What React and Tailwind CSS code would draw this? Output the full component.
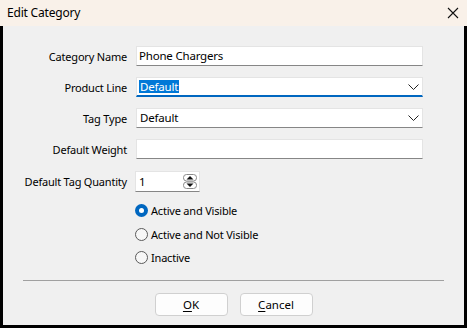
import React from 'react';

const font = { fontFamily: '"Noto Sans", "Segoe UI", sans-serif' };

const Chevron = () => (
    <svg width="11" height="6" viewBox="0 0 11 6" className="shrink-0">
        <path d="M0.5 0.5 L5.5 5.5 L10.5 0.5" fill="none" stroke="#222" strokeWidth="1" />
    </svg>
);

const Field = ({ children, focused }) => (
    <div
        className={`w-[287px] h-[20px] bg-white border border-[#e4e4e4] flex items-center ${focused ? 'border-b-2 border-b-[#0067c0]' : 'border-b-[#868686]'}`}
    >
        {children}
    </div>
);

const Row = ({ label, children, className = '' }) => (
    <div className={`flex items-center ${className}`}>
        <div className="w-[124px] text-right text-[11px] tracking-[-0.2px] text-black leading-none">{label}</div>
        <div className="ml-[9px]">{children}</div>
    </div>
);

const Radio = ({ checked, label, className = '' }) => (
    <div className={`flex items-center h-[16px] ml-[132px] ${className}`}>
        {checked ? (
            <span className="w-[13px] h-[13px] rounded-full bg-[#0067c0] flex items-center justify-center">
                <span className="w-[5px] h-[5px] rounded-full bg-white" />
            </span>
        ) : (
            <span className="w-[13px] h-[13px] rounded-full border border-[#5a5a5a] bg-[#f7f7f7]" />
        )}
        <span className="ml-[3px] text-[11px] tracking-[-0.2px] text-black leading-none">{label}</span>
    </div>
);

export default function App() {
    return (
        <div className="w-[467px] h-[328px] bg-black flex flex-col overflow-hidden" style={font}>
            {/* title bar */}
            <div className="h-[26px] bg-[#f9f1e9] flex items-center justify-between pl-[7px] pr-[6px]">
                <span className="text-[12px] tracking-[-0.2px] text-black">Edit Category</span>
                <svg width="12" height="12" viewBox="0 0 12 12" className="mr-[2px]">
                    <path d="M1 1 L11 11 M11 1 L1 11" stroke="#111" strokeWidth="1.1" />
                </svg>
            </div>

            <div className="flex-1 mx-[3px] mb-[3px] bg-[#f0f0f0] flex flex-col pt-[20px]">
                <Row label="Category Name">
                    <Field>
                        <span className="ml-[2px] text-[11.5px] tracking-[-0.2px] text-black leading-none">Phone Chargers</span>
                    </Field>
                </Row>

                <Row label="Product Line" className="mt-[11px]">
                    <Field focused>
                        <div className="flex-1 flex items-center pl-[2px]">
                            <span className="bg-[#0078d7] text-white text-[11.5px] tracking-[-0.2px] leading-[13px] h-[13px] px-[1px]">Default</span>
                        </div>
                        <div className="mr-[3px]"><Chevron /></div>
                    </Field>
                </Row>

                <Row label="Tag Type" className="mt-[11px]">
                    <Field>
                        <span className="flex-1 ml-[3px] text-[11.5px] tracking-[-0.2px] text-black leading-none">Default</span>
                        <div className="mr-[3px]"><Chevron /></div>
                    </Field>
                </Row>

                <Row label="Default Weight" className="mt-[11px]">
                    <Field />
                </Row>

                <Row label="Default Tag Quantity" className="mt-[12px]">
                    <div className="w-[65px] h-[21px] -ml-[1px] bg-white border border-[#e4e4e4] border-b-[#868686] flex items-center justify-between">
                        <span className="ml-[3px] text-[11.5px] text-black leading-none">1</span>
                        <svg width="14" height="15" viewBox="0 0 14 15" className="mr-[2px]">
                            <rect x="0.5" y="0.5" width="13" height="6.5" rx="3" fill="#fff" stroke="#8a8a8a" />
                            <rect x="0.5" y="8" width="13" height="6.5" rx="3" fill="#fff" stroke="#8a8a8a" />
                            <path d="M3.5 5.5 L7 2 L10.5 5.5 Z" fill="#111" />
                            <path d="M3.5 9.5 L7 13 L10.5 9.5 Z" fill="#111" />
                        </svg>
                    </div>
                </Row>

                <Radio checked label="Active and Visible" className="mt-[10px]" />
                <Radio label="Active and Not Visible" className="mt-[8px]" />
                <Radio label="Inactive" className="mt-[7px]" />

                <div className="mx-[20px] mt-[15px] h-px bg-[#a0a0a0]" />

                <div className="flex justify-center gap-[12px] mt-[12px]">
                    <button className="w-[73px] h-[23px] bg-[#fdfdfd] border border-[#d0d0d0] rounded-[4px] text-[11.5px] text-black leading-none">
                        <span className="underline underline-offset-2">O</span>K
                    </button>
                    <button className="w-[73px] h-[23px] bg-[#fdfdfd] border border-[#d0d0d0] rounded-[4px] text-[11.5px] text-black leading-none">
                        <span className="underline underline-offset-2">C</span>ancel
                    </button>
                </div>
            </div>
        </div>
    );
}
